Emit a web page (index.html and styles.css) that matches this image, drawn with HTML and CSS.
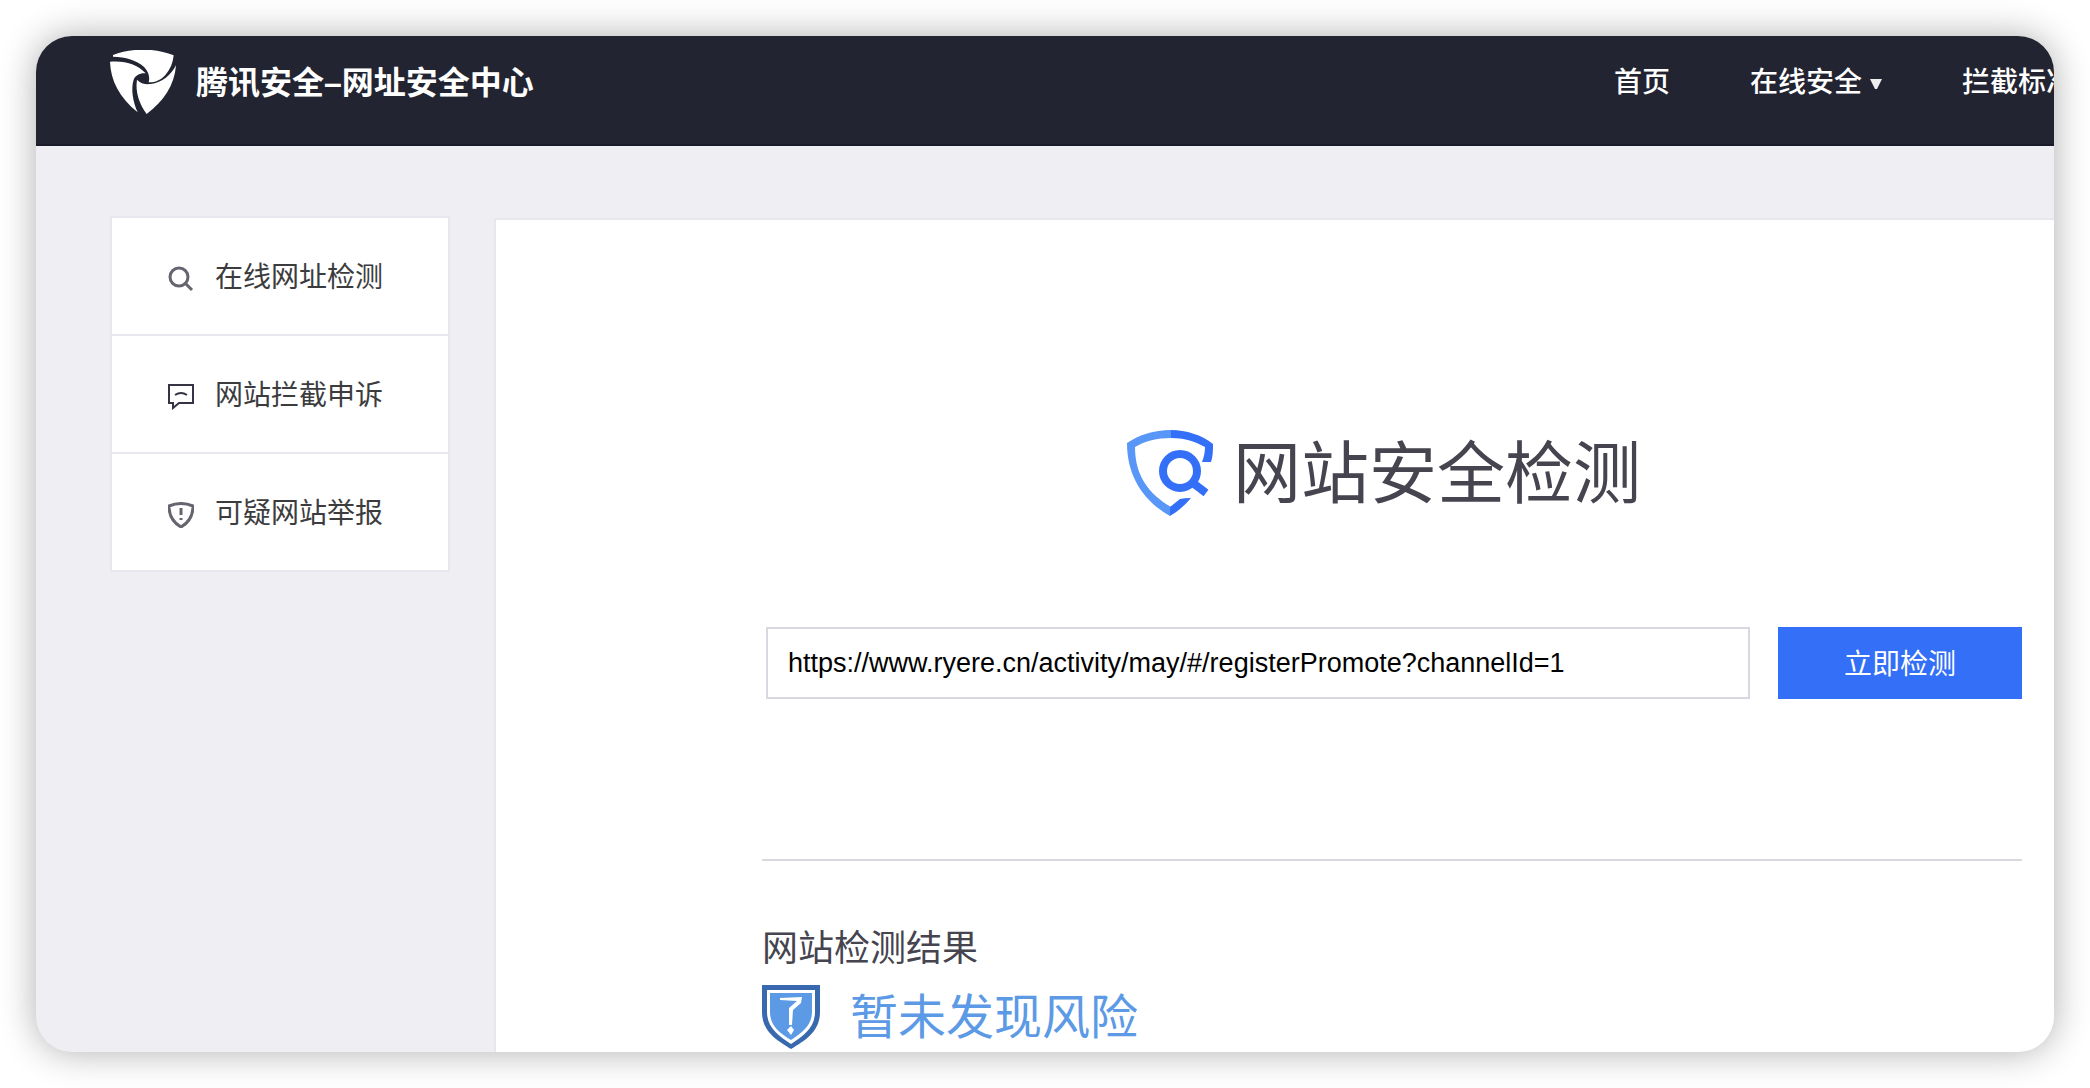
FILE: index.html
```html
<!DOCTYPE html>
<html lang="zh-CN">
<head>
<meta charset="utf-8">
<title>腾讯安全–网址安全中心</title>
<link rel="stylesheet" href="styles.css">
</head>
<body>
<div class="window">
  <header class="header">
    <a class="brand" href="#">
      <svg class="brand-logo" viewBox="30 30 198 192" preserveAspectRatio="none" aria-hidden="true">
        <path d="M39 45C65 34 96 29 130 29C163 29 195 35 221 46C219 68 211 88 197 104C182 121 163 128 146 127C150 112 146 96 133 82C111 60 76 51 39 50Z"/>
        <path d="M30 65C76 61 114 74 137 100C121 98 106 106 101 119C92 146 99 187 113 217C58 172 32 122 30 65Z"/>
        <path d="M228 76C224 134 191 185 140 222C118 192 105 155 111 119C121 130 136 134 152 132C187 128 213 105 228 76Z"/>
      </svg>
      <span>腾讯安全–网址安全中心</span>
    </a>
    <nav class="nav">
      <a href="#">首页</a>
      <a href="#">在线安全<svg class="caret" viewBox="0 0 12 10" aria-hidden="true"><path d="M0 0H12L7 10H5Z"/></svg></a>
      <a href="#">拦截标准</a>
    </nav>
  </header>
  <div class="layout">
    <aside class="sidebar">
      <a href="#">
        <svg class="bold" viewBox="0 0 26 26" aria-hidden="true"><circle cx="11" cy="11" r="9"/><path d="M17 17L24 24"/></svg>
        <span>在线网址检测</span>
      </a>
      <a href="#">
        <svg class="dark" viewBox="0 0 26 26" aria-hidden="true"><path d="M1 1H25V19H11L5 24V19H1Z"/><path d="M7 11Q13 7 19 11"/></svg>
        <span>网站拦截申诉</span>
      </a>
      <a href="#">
        <svg class="bold" viewBox="0 0 26 26" aria-hidden="true"><path d="M1 4Q13-1 25 4C25 14 20 21 13 25C6 21 1 14 1 4Z"/><path d="M13 6V13M13 16V18"/></svg>
        <span>可疑网站举报</span>
      </a>
    </aside>
    <main class="panel">
      <h1 class="title">
        <svg class="title-icon" viewBox="0 0 86 86" aria-hidden="true">
          <path class="light" d="M44 0C27 0 12 5 0 13C0 45 15 70 43 86L44 77C22 64 8 46 8 17C18 11 30 8 44 8Z"/>
          <path class="strong" d="M44 0C59 0 75 5 86 14C86 20 86 26 84 32H75C77 27 78 22 78 17C67 11 57 8 44 8Z"/>
          <path class="strong" d="M43 77L53 69Q57 68 64 68Q55 79 43 86Z"/>
          <circle class="ring" cx="53" cy="41" r="17"/>
          <path class="ring" d="M66 53L79 63"/>
        </svg>
        <span>网站安全检测</span>
      </h1>
      <form class="search">
        <input type="text" aria-label="网址" value="https://www.ryere.cn/activity/may/#/registerPromote?channelId=1">
        <button type="button">立即检测</button>
      </form>
      <section class="result">
        <h2>网站检测结果</h2>
        <p class="verdict">
          <svg class="verdict-icon" viewBox="0 0 58 64" aria-hidden="true">
            <path fill="#3869ae" d="M0 0H58V27C58 46 44 55 29 64C14 55 0 46 0 27Z"/>
            <path fill="#fff" d="M5 5H53V27C53 43 41 51 29 59C17 51 5 43 5 27Z"/>
            <path fill="#5c9ae6" d="M8 8H50V27C50 41 39 48 29 55C18 48 8 41 8 27Z"/>
            <path fill="#fff" d="M18 13L40 12L39 18L31 25L30 40H27V23L35 16L18 15ZM29 41L32 45L29 50L25 45Z"/>
          </svg>
          <span>暂未发现风险</span>
        </p>
      </section>
    </main>
  </div>
</div>
</body>
</html>
```
FILE: styles.css
```css
* {
  box-sizing: border-box;
}

body {
  margin: 0;
  padding: 36px;
  background: #fff;
  font-family: "Liberation Sans", "Noto Sans CJK SC", sans-serif;
  font-size: 28px;
}

a {
  color: inherit;
  text-decoration: none;
}

svg {
  flex: none;
}

.window {
  display: flex;
  flex-direction: column;
  min-height: calc(100vh - 72px);
  overflow: hidden;
  border-radius: 36px;
  background: #efeef3;
  box-shadow: 0 0 36px rgba(0, 0, 0, 0.32);
}

.header {
  display: flex;
  justify-content: space-between;
  height: 110px;
  padding: 14px 0 0 74px;
  border-bottom: 2px solid #1b1c29;
  background: #232431;
  color: #fff;
  line-height: 66px;
  white-space: nowrap;
}

.brand {
  display: flex;
  gap: 20px;
  height: 66px;
  font-size: 32px;
  font-weight: 700;
}

.brand-logo {
  width: 66px;
  height: 64px;
  fill: #fff;
}

.nav {
  display: flex;
  gap: 80px;
  height: 66px;
  margin-right: -20px;
  font-weight: 500;
}

.nav a {
  display: flex;
  align-items: center;
  gap: 8px;
}

.caret {
  width: 12px;
  height: 10px;
  margin-top: 2px;
  fill: #eee;
}

.layout {
  display: flex;
  flex: 1;
  align-items: flex-start;
  gap: 44px;
  padding: 70px 0 0 74px;
}

.sidebar {
  flex: none;
  width: 340px;
  border: 2px solid #e8e7ed;
  background: #fff;
  color: #3c3c3e;
}

.sidebar a {
  display: flex;
  align-items: center;
  gap: 21px;
  height: 116px;
  padding: 0 0 2px 56px;
}

.sidebar a + a {
  height: 118px;
  border-top: 2px solid #e8e7ed;
}

.sidebar svg {
  width: 26px;
  height: 26px;
  margin-top: 8px;
  fill: none;
  stroke: #65646f;
  stroke-width: 2;
}

.sidebar .bold {
  stroke-width: 3;
}

.sidebar .dark {
  stroke: #343444;
}

.panel {
  flex: 1;
  align-self: stretch;
  min-width: 0;
  margin-top: 2px;
  padding: 210px 32px 0 266px;
  border: 2px solid #e8e7ed;
  border-width: 2px 0 0 2px;
  background: #fff;
  color: #45444f;
}

.title {
  display: flex;
  justify-content: center;
  gap: 20px;
  margin: 0;
  padding-right: 16px;
  font-size: 68px;
  font-weight: 400;
  line-height: 88px;
  white-space: nowrap;
}

.title-icon {
  width: 86px;
  height: 86px;
}

.light {
  fill: #5896f8;
}

.strong {
  fill: #336ff7;
}

.ring {
  fill: none;
  stroke: #336ff7;
  stroke-width: 8;
}

.search {
  display: flex;
  gap: 28px;
  margin-top: 109px;
  padding-left: 4px;
}

.search input {
  flex: 1;
  min-width: 0;
  height: 72px;
  padding: 0 20px;
  border: 2px solid #d9d8e0;
  border-radius: 0;
  background: #fff;
  color: #000;
  font: 27px "Liberation Sans", sans-serif;
}

.search button {
  width: 244px;
  padding: 0 0 2px;
  border: 0;
  background: #336ff7;
  color: #fff;
  font: inherit;
}

.result {
  margin-top: 160px;
  padding-top: 64px;
  border-top: 2px solid #d9d8e0;
}

.result h2 {
  margin: 0;
  font-size: 36px;
  font-weight: 400;
  line-height: 48px;
}

.verdict {
  display: flex;
  gap: 30px;
  margin: 12px 0 0;
  color: #5c9ae6;
  font-size: 48px;
  line-height: 66px;
}

.verdict-icon {
  width: 58px;
  height: 64px;
}
```
